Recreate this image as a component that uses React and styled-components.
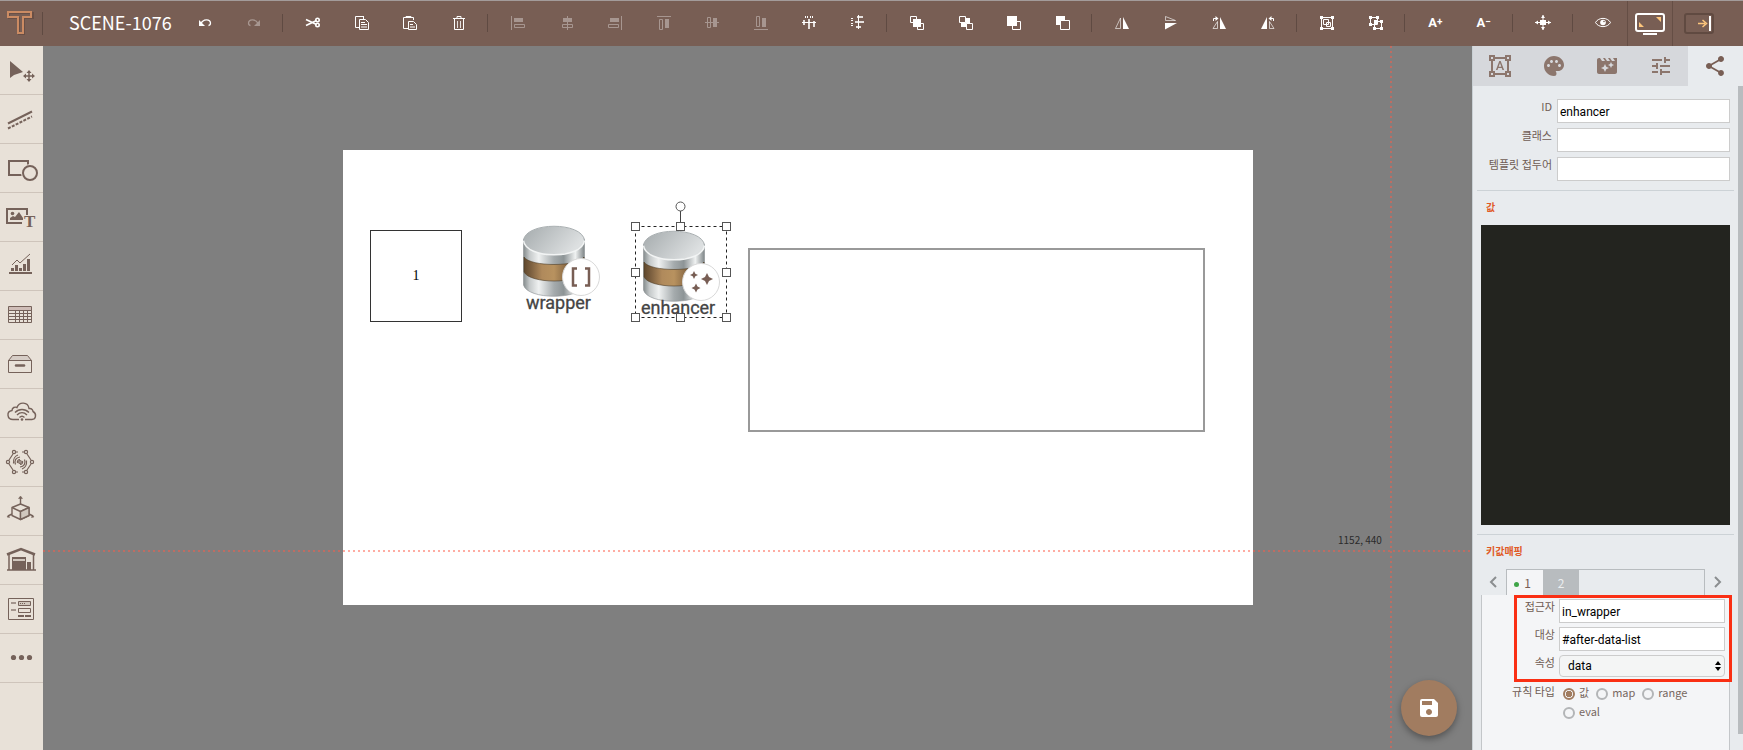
import React, { useState } from "react";
import styled, { createGlobalStyle, css } from "styled-components";
import {
  MdFormatShapes,
  MdPalette,
  MdMovieFilter,
  MdTune,
  MdShare,
  MdSave,
} from "react-icons/md";

const BROWN = "#785e54";
const TOOL = "#75625a";
const SAND = "#e8e1d8";

const GlobalStyle = createGlobalStyle`
  * {
    box-sizing: border-box;
  }
  body {
    margin: 0;
    font-family: "Noto Sans CJK KR", "Noto Sans", sans-serif;
    font-size: 11px;
    color: ${BROWN};
  }
  button {
    border: none;
    padding: 0;
    background: transparent;
    color: inherit;
    font: inherit;
    cursor: pointer;
  }
  svg {
    display: block;
  }
`;

const Page = styled.div`
  height: 100vh;
  display: flex;
  flex-direction: column;
  overflow: hidden;
`;

/* top toolbar */

const Toolbar = styled.header`
  flex: none;
  height: 46px;
  display: flex;
  align-items: stretch;
  background: ${BROWN};
  border-top: 1px solid #a39b9a;
  padding-bottom: 1px;
  color: #fff;
`;

const Logo = styled.a`
  width: 42px;
  display: flex;
  align-items: center;
  padding-left: 6px;
`;

const Divider = styled.span`
  flex: none;
  align-self: center;
  width: ${(p) => p.$width || 11}px;
  height: ${(p) => p.$height || 18}px;
  display: flex;
  &::before {
    content: "";
    width: 1px;
    margin-left: ${(p) => (p.$width ? 0 : 4)}px;
    background: #5f4a42;
  }
`;

const Title = styled.h1`
  flex: none;
  width: 138px;
  margin: 0;
  padding-left: 26px;
  font-size: 18px;
  line-height: 42px;
  font-weight: 400;
`;

const Tools = styled.div`
  flex: 1;
  display: flex;
`;

const ToolButton = styled.button`
  flex: 1;
  display: flex;
  align-items: center;
  justify-content: center;
  opacity: ${(p) => (p.disabled ? 0.35 : 1)};
`;

const FontTool = styled.span`
  display: flex;
  font: 700 13px/16px Roboto, sans-serif;
  sup {
    font-size: 10px;
    line-height: 14px;
    vertical-align: top;
  }
`;

const WideTool = styled.button`
  flex: none;
  width: ${(p) => p.$width}px;
  margin-bottom: -1px;
  padding-left: ${(p) => p.$pad}px;
  border-left: 1px solid #654e45;
  display: flex;
  align-items: center;
`;

/* left tool bar */

const Body = styled.div`
  flex: 1;
  min-height: 0;
  display: flex;
`;

const Sidebar = styled.nav`
  flex: none;
  width: 43px;
  background: ${SAND};
`;

const SideButton = styled.button`
  display: block;
  width: 100%;
  height: 49px;
  border-bottom: 1px solid #cec4bb;
  color: ${TOOL};
`;

/* scene */

const Workspace = styled.main`
  flex: 1;
  position: relative;
  overflow: hidden;
  background: #7f7f7f;
`;

const Board = styled.div`
  position: absolute;
  left: 300px;
  top: 104px;
  width: 910px;
  height: 455px;
  background: #fff;
`;

const Item = styled.div`
  position: absolute;
  left: ${(p) => p.$x}px;
  top: ${(p) => p.$y}px;
`;

const TextBox = styled(Item)`
  width: 92px;
  height: 92px;
  border: 1px solid #333;
  display: flex;
  align-items: center;
  justify-content: center;
  font: 14px "Liberation Serif", serif;
  color: #000;
`;

const DataBox = styled(Item)`
  width: 457px;
  height: 184px;
  border: 2px solid #999;
`;

const Guide = styled.div`
  position: absolute;
  ${(p) =>
    p.$vertical
      ? css`
          left: 1347px;
          top: 0;
          bottom: 0;
          width: 2px;
          background: repeating-linear-gradient(
            180deg,
            rgba(255, 90, 70, 0.5) 0 2px,
            transparent 2px 5px
          );
        `
      : css`
          left: 0;
          right: 0;
          top: 504px;
          height: 2px;
          background: repeating-linear-gradient(
            90deg,
            rgba(255, 90, 70, 0.5) 0 2px,
            transparent 2px 5px
          );
        `}
`;

const Position = styled.span`
  position: absolute;
  left: 1295px;
  top: 486px;
  font-size: 10px;
  line-height: 16px;
  color: #2b2b2b;
`;

const SaveButton = styled.button`
  position: absolute;
  right: 15px;
  bottom: 14px;
  width: 56px;
  height: 56px;
  border-radius: 50%;
  && {
    background: #a17c60;
    color: #fff;
  }
  display: flex;
  align-items: center;
  justify-content: center;
  box-shadow: 0 3px 7px rgba(0, 0, 0, 0.35);
`;

/* property panel */

const Panel = styled.aside`
  flex: none;
  width: 271px;
  display: flex;
  flex-direction: column;
  background: #e8ebee;
  border-left: 1px solid #c9d0d4;
`;

const PanelTabs = styled.div`
  flex: none;
  display: flex;
  height: 40px;
  padding-right: 1px;
`;

const PanelTab = styled.button`
  flex: 1;
  display: flex;
  align-items: center;
  justify-content: center;
  && {
    background: ${(p) => (p.$active ? "transparent" : "#d6d8dc")};
    color: ${(p) => (p.$active ? BROWN : "#8c766d")};
  }
`;

const PanelBody = styled.div`
  flex: 1;
  min-height: 0;
  display: flex;
`;

const PanelContent = styled.div`
  flex: 1;
  min-width: 0;
  display: flex;
  flex-direction: column;
  padding: 0 4px;
`;

const ScrollThumb = styled.div`
  width: 5px;
  margin-bottom: 16px;
  background: #b8bcbf;
`;

const Section = styled.section`
  padding: 0 4px;
  border-bottom: 1px solid #ccd2d6;
`;

const MappingSection = styled.section`
  flex: 1;
  display: flex;
  flex-direction: column;
  padding: 0 4px;
`;

const Fields = styled.div`
  display: grid;
  grid-template-columns: 71px 1fr;
  column-gap: 5px;
  row-gap: 5px;
  padding: 13px 0 9px;
`;

const Label = styled.label`
  text-align: right;
  line-height: 14px;
  color: #6f5c54;
`;

const TextInput = styled.input`
  width: 100%;
  height: 24px;
  border: 1px solid #ccc;
  background: #fff;
  padding: 2px 2px 0;
  font: 12px Roboto, sans-serif;
  color: #000;
  outline: none;
`;

const Heading = styled.h2`
  margin: 8px 0 10px;
  padding: 0 5px;
  font-size: 10px;
  line-height: 16px;
  font-weight: 700;
  color: #e05a26;
`;

const CodeEditor = styled.textarea`
  display: block;
  width: 100%;
  height: 300px;
  margin-bottom: 9px;
  border: none;
  resize: none;
  outline: none;
  background: #23241f;
  color: #f8f8f2;
`;

const MappingTabs = styled.div`
  display: flex;
  height: 26px;
`;

const Arrow = styled.button`
  flex: none;
  width: 25px;
  display: flex;
  align-items: center;
  justify-content: center;
`;

const TabStrip = styled.div`
  flex: 1;
  display: flex;
  border: 1px solid #b8bcbf;
  border-bottom: none;
`;

const MappingTab = styled.button`
  width: 36px;
  font-size: 12px;
  line-height: 24px;
  && {
    padding-right: ${(p) => (p.$active ? 5 : 0)}px;
    background: ${(p) => (p.$active ? "#f4f5f7" : "#b8bcbf")};
    color: ${(p) => (p.$active ? BROWN : "#eceeef")};
  }
`;

const Dot = styled.span`
  display: inline-block;
  width: 5px;
  height: 5px;
  margin-right: 5px;
  vertical-align: middle;
  border-radius: 50%;
  background: #3fa548;
`;

const MappingBody = styled.div`
  flex: 1;
  background: #f4f5f7;
  border: solid #c3c6c9;
  border-width: 0 1px;
`;

const Rules = styled.div`
  position: relative;
  display: grid;
  grid-template-columns: 73px 1fr;
  column-gap: 4px;
  row-gap: 4px;
  padding: 4px 4px 4px 0;
  &::after {
    content: "";
    position: absolute;
    inset: 0 -3px -1px 32px;
    border: 3px solid #fa2f14;
    pointer-events: none;
  }
`;

const SelectWrap = styled.div`
  position: relative;
  svg {
    position: absolute;
    right: 4px;
    top: 6px;
    pointer-events: none;
  }
`;

const Select = styled.select`
  appearance: none;
  display: block;
  width: 100%;
  height: 22px;
  border: 1px solid #ccc;
  border-radius: 4px;
  background: #f4f5f5;
  padding: 0 8px;
  font: 12px Roboto, sans-serif;
  color: #000;
  outline: none;
`;

const RuleType = styled.fieldset`
  display: grid;
  grid-template-columns: 73px 1fr;
  column-gap: 8px;
  margin: 0;
  padding: 3px 0 0;
  border: none;
`;

const Options = styled.div`
  display: flex;
  flex-wrap: wrap;
  column-gap: 7px;
`;

const Option = styled.label`
  display: flex;
  align-items: center;
  height: 19px;
  gap: 4px;
  color: #77675f;
  line-height: 16px;
  span {
    margin-top: -3px;
  }
`;

const Radio = styled.input`
  appearance: none;
  width: 12px;
  height: 12px;
  margin: 0;
  border: 2px solid #b3b5b7;
  border-radius: 50%;
  &:checked {
    border-color: #a17c60;
    background: radial-gradient(#a17c60 0 3px, transparent 3px);
  }
`;

const Glyph = ({ children }) => (
  <svg
    width="16"
    height="16"
    viewBox="0 0 16 16"
    fill="none"
    stroke="none"
    aria-hidden="true"
  >
    {children}
  </svg>
);

const undoShape = (
  <>
    <path d="M2 5v6h6z" fill="#fff" />
    <path
      d="M4 8.500C6 4 13 3.500 13.500 8c0 1.500-.5 2.300-2 2.500"
      stroke="#fff"
      strokeWidth="1.300"
    />
  </>
);

const mirror = "matrix(-1 0 0 1 16 0)";

const rotateShape = (
  <>
    <path d="M9 2v12h6z" fill="#fff" />
    <path d="M6.500 6.500v7H2z" stroke="#fff" strokeOpacity=".65" />
    <path d="M2.500 6V3.500H5" stroke="#fff" />
    <path d="M4.500 1v5l3-2.500z" fill="#fff" />
  </>
);

const icons = {
  undo: undoShape,
  redo: <g transform={mirror}>{undoShape}</g>,
  cut: (
    <g stroke="#fff" strokeWidth="1.600">
      <path d="M1 4.500l10.500 5M1 10.500l10.500-5" />
      <circle cx="12.500" cy="5" r="1.700" />
      <circle cx="12.500" cy="10" r="1.700" />
    </g>
  ),
  copy: (
    <g stroke="#fff">
      <path d="M5 12.500H1.500v-11H9" />
      <path d="M9.500 1v3M5.500 4.500h6l3 3v7h-9zM7 7.500h4M7 9.500h6M7 12h6" />
    </g>
  ),
  paste: (
    <g stroke="#fff">
      <path d="M6 13.500H1.500v-11h10V5M4 2V1.500h5V3" />
      <path d="M6.500 6.500h5l3 3v5h-8zM8 9.500h3M8 12h5" />
    </g>
  ),
  trash: (
    <g stroke="#fff">
      <path d="M2 3.500h12M6 3V1.500h4V3M3.500 4v10.500h9V4" />
      <path d="M6.500 6v7M9.500 6v7" strokeOpacity=".8" />
    </g>
  ),
  alignLeft: (
    <g fill="#fff">
      <path d="M1 1h1v14H1zM4 3h9v4H4z" />
      <path d="M4.500 9.500h10v3h-10z" fill="none" stroke="#fff" />
    </g>
  ),
  alignCenter: (
    <g fill="#fff">
      <path d="M8 1h1v14H8zM4 3h9v4H4z" />
      <path d="M3.500 9.500h10v3h-10z" fill="none" stroke="#fff" />
    </g>
  ),
  alignRight: (
    <g fill="#fff">
      <path d="M14 1h1v14h-1zM3 3h9v4H3z" />
      <path d="M1.500 9.500h10v3h-10z" fill="none" stroke="#fff" />
    </g>
  ),
  alignTop: (
    <g fill="#fff">
      <path d="M1 1h14v1H1zM9 4h4v9H9z" />
      <path d="M3.500 4.500h3v10h-3z" fill="none" stroke="#fff" />
    </g>
  ),
  alignMiddle: (
    <g fill="#fff">
      <path d="M1 7h14v1H1zM9 3h4v9H9z" />
      <path d="M3.500 2.500h3v10h-3z" fill="none" stroke="#fff" />
    </g>
  ),
  alignBottom: (
    <g fill="#fff">
      <path d="M1 14h14v1H1zM9 3h4v9H9z" />
      <path d="M3.500 1.500h3v10h-3z" fill="none" stroke="#fff" />
    </g>
  ),
  spaceX: (
    <g fill="#fff">
      <path d="M1 7h14v1H1zM4 1h1v2H4zM6 1h1v2H6zM9 1h1v2H9zM11 1h1v2h-1z" />
      <path d="M2 5h2v5H2zM7 4h2v10H7zM12 6h2v6h-2z" fillOpacity=".8" />
    </g>
  ),
  spaceY: (
    <g fill="#fff">
      <path d="M8 0h1v14H8zM1 3h2v1H1zM1 5h2v1H1zM1 8h2v1H1zM1 10h2v1H1z" />
      <path d="M7 1h6v2H7zM5 6h9v2H5zM6 11h5v2H6z" fillOpacity=".8" />
    </g>
  ),
  toFront: (
    <>
      <path d="M1.500 1.500h6v6h-6zM8.500 8.500h6v6h-6z" stroke="#fff" />
      <path d="M4 4h8v8H4z" fill="#fff" />
    </>
  ),
  toBack: (
    <>
      <path d="M3 3h9v9H3z" fill="#fff" />
      <path
        d="M1.500 1.500h6v6h-6zM8.500 8.500h6v6h-6z"
        fill={BROWN}
        stroke="#fff"
      />
    </>
  ),
  forward: (
    <>
      <path d="M6.500 6.500h8v8h-8z" stroke="#fff" />
      <path d="M1 1h10v10H1z" fill="#fff" />
    </>
  ),
  backward: (
    <>
      <path d="M1 1h9v9H1z" fill="#fff" />
      <path d="M5.500 5.500h9v9h-9z" fill={BROWN} stroke="#fff" />
    </>
  ),
  flipX: (
    <>
      <path d="M9 2v12h6z" fill="#fff" />
      <path d="M6.500 3v10.500H1.500z" stroke="#fff" strokeOpacity=".6" />
    </>
  ),
  flipY: (
    <>
      <path d="M2 8h12L2 14.500z" fill="#fff" />
      <path d="M2.500 1.500v4h10z" stroke="#fff" strokeOpacity=".6" />
    </>
  ),
  rotateCw: rotateShape,
  rotateCcw: <g transform={mirror}>{rotateShape}</g>,
  group: (
    <>
      <path
        d="M2.500 2.500h11v11h-11zM4.500 4.500h5v5h-5zM7.500 7.500h4v4h-4z"
        stroke="#fff"
      />
      <path
        d="M1 1h3v3H1zM12 1h3v3h-3zM1 12h3v3H1zM12 12h3v3h-3z"
        fill="#fff"
      />
    </>
  ),
  ungroup: (
    <>
      <path d="M2.500 2.500h7v7h-7zM6.500 6.500h7v7h-7z" stroke="#fff" />
      <path
        d="M1 1h3v3H1zM8 1h3v3H8zM1 8h3v3H1zM6 5h4v4H6zM12 5h3v3h-3zM5 12h3v3H5zM12 12h3v3h-3z"
        fill="#fff"
      />
    </>
  ),
  fit: (
    <g fill="#fff">
      <path d="M5 5h6v5H5z" />
      <path d="M0 7h16v1H0zM7.500 0h1v15h-1z" />
      <path d="M0 7.500L3 5.500v4zM16 7.500L13 5.500v4zM8 0l2 3H6zM8 15l2-3H6z" />
    </g>
  ),
  eye: (
    <>
      <path
        d="M.5 7.500C3.500 2 12.500 2 15.500 7.500 12.500 13 3.500 13 .5 7.500z"
        stroke="#fff"
      />
      <circle cx="8" cy="7.500" r="2.800" fill="#fff" />
      <circle cx="9" cy="6.500" r=".8" fill={BROWN} />
    </>
  ),
};

const toolGroups = [
  [
    ["Undo", "undo"],
    ["Redo", "redo", true],
  ],
  [
    ["Cut", "cut"],
    ["Copy", "copy"],
    ["Paste", "paste"],
    ["Delete", "trash"],
  ],
  [
    ["Align left", "alignLeft", true],
    ["Align center", "alignCenter", true],
    ["Align right", "alignRight", true],
    ["Align top", "alignTop", true],
    ["Align middle", "alignMiddle", true],
    ["Align bottom", "alignBottom", true],
    ["Distribute horizontally", "spaceX"],
    ["Distribute vertically", "spaceY"],
  ],
  [
    ["Bring to front", "toFront"],
    ["Send to back", "toBack"],
    ["Bring forward", "forward"],
    ["Send backward", "backward"],
  ],
  [
    ["Flip horizontally", "flipX"],
    ["Flip vertically", "flipY"],
    ["Rotate clockwise", "rotateCw"],
    ["Rotate counterclockwise", "rotateCcw"],
  ],
  [
    ["Group", "group"],
    ["Ungroup", "ungroup"],
  ],
  [
    ["Larger font", "+"],
    ["Smaller font", "−"],
  ],
  [["Fit scene", "fit"]],
  [["Preview", "eye"]],
];

const dots = (list, r) =>
  list.map(([x, y]) => <circle key={`${x}-${y}`} cx={x} cy={y} r={r} />);

const sideTools = [
  {
    name: "Select",
    art: (
      <>
        <path d="M10 15v17l4-3 9-3z" fill={TOOL} />
        <path d="M24 30h10M29 25v10" stroke={TOOL} strokeWidth="1.500" />
        <path
          d="M23 30l3-2.500v5zM35 30l-3-2.500v5zM29 24l2.500 3h-5zM29 36l2.500-3h-5z"
          fill={TOOL}
        />
      </>
    ),
  },
  {
    name: "Line",
    art: (
      <g stroke={TOOL} strokeWidth="2">
        <path d="M8 28.500L32 16.500" />
        <path d="M8 33.500L32 21.500" strokeDasharray="3 1.300" />
      </g>
    ),
  },
  {
    name: "Shape",
    art: (
      <g stroke={TOOL} strokeWidth="2">
        <path d="M9 17h19v14H9z" />
        <circle cx="30" cy="29" r="9" fill={SAND} stroke="none" />
        <circle cx="30" cy="29" r="7" />
      </g>
    ),
  },
  {
    name: "Text and media",
    art: (
      <>
        <path d="M27 22v-6H7v14h15" stroke={TOOL} strokeWidth="2" />
        <circle cx="12.500" cy="20.500" r="1.800" fill={TOOL} />
        <path d="M10 27v-2l3-2 2 1 4-5 4 6v2z" fill={TOOL} />
        <text
          x="24"
          y="34"
          fill={TOOL}
          fontFamily="Liberation Serif, serif"
          fontWeight="700"
          fontSize="17"
        >
          T
        </text>
      </>
    ),
  },
  {
    name: "Chart",
    art: (
      <>
        <path
          d="M9 30h23v2H9zM11 26h3v3h-3zM15 23h3v6h-3zM19 26h3v3h-3zM23 22h3v7h-3zM27 17h3v12h-3z"
          fill={TOOL}
        />
        <path d="M12 23l5-5 3 3 10-9" stroke={TOOL} />
      </>
    ),
  },
  {
    name: "Table",
    art: (
      <g stroke={TOOL}>
        <path d="M8.500 15.500h23v4h-23z" fill="#cfbdb7" />
        <path d="M8.500 19.500h23v12h-23zM8 22.500h24M8 25.500h24M8 28.500h24M15.500 20v12M19.500 20v12M23.500 20v12M27.500 20v12" />
      </g>
    ),
  },
  {
    name: "Container",
    art: (
      <g stroke={TOOL}>
        <path d="M8.500 20.500l4-5h15l4 5z" fill="#d6cdc6" />
        <path d="M8.500 20.500h23v12h-23z" />
        <path d="M16 25.500h8" strokeWidth="2.500" strokeLinecap="round" />
      </g>
    ),
  },
  {
    name: "IoT",
    art: (
      <g stroke={TOOL} strokeWidth="1.400">
        <path d="M19 30.500h-6c-6 0-7-8-1-9 0-3 3-4 5-3 2-6 11-6 12 1 3-.5 4 2 4 3 4 2 3 8-1 8h-7" />
        <path d="M15 23.500c4-4 10-4 14 0M17 26c3-3 7-3 10 0M19.500 28.500c1.500-1.500 3.500-1.500 5 0" />
        <circle cx="22" cy="30.500" r="1.300" fill={TOOL} stroke="none" />
      </g>
    ),
  },
  {
    name: "Network",
    art: (
      <g stroke={TOOL} strokeWidth="1.200">
        <path d="M16 14h2M22 14h2M16 34h2M22 34h2M13 16l-4 6M27 16l4 6M9 26l4 6M31 26l-4 6" />
        {dots([[14, 14], [26, 14], [8, 24], [32, 24], [14, 34], [26, 34]], 1.6)}
        <circle cx="20" cy="24" r="1.300" />
        <path d="M17.500 25c-.5-2 .5-3.500 2.500-3.500M15.500 26.500c-1.500-4 .5-7 4.500-7.500M13.500 25.500c-.5-4 1.500-7.500 4.500-8.500M22.500 23c.5 2-.5 3.500-2.500 3.500M24.500 21.500c1.500 4-.5 7-4.500 7.500M26.500 22.500c.5 4-1.500 7.500-4.500 8.500" />
      </g>
    ),
  },
  {
    name: "3D",
    art: (
      <g stroke={TOOL} strokeWidth="1.400" strokeLinejoin="round">
        <path d="M12 27l-4 2M29 27l4 2" />
        <path d="M20.500 17l8.500 3.500v8l-8.500 4-8.500-4v-8z" fill={SAND} />
        <path d="M12 20.500l8.500 4 8.500-4M20.500 24.500v8" />
        <path d="M20.500 10v7" />
        <path d="M20.500 24.500l8.500-4v8l-8.500 4z" fill="#d0c7be" />
        <path
          d="M18.500 11.500l2-2.500 2 2.500zM8.500 28L7 30l2.500.5zM32.500 28l1.500 2-2.500.5z"
          fill={TOOL}
          strokeWidth=".5"
        />
      </g>
    ),
  },
  {
    name: "Warehouse",
    art: (
      <>
        <path d="M7 18.500L21 13l14 5.500" stroke={TOOL} strokeWidth="2.500" />
        <path
          d="M9 18v15.500M33.500 18v15.500M7 34h29"
          stroke={TOOL}
          strokeWidth="1.500"
        />
        <path d="M12 21h14v13H12zM27 26h4v8h-4z" fill={TOOL} />
        <path d="M13 23h12v2H13z" fill="#d0c7be" />
      </>
    ),
  },
  {
    name: "Form",
    art: (
      <>
        <path d="M8.500 13.500h25v21h-25z" stroke={TOOL} />
        <path d="M11 17h5v2h-5zM11 24h5v2h-5z" fill="#a3958d" />
        <path d="M18.500 16.500h12v4h-12z" fill="#d0c7be" stroke={TOOL} />
        <path d="M20 18h1v1h-1zM22 18h1v1h-1zM24 18h1v1h-1z" fill={TOOL} />
        <path d="M18.500 23.500h12v4h-12z" stroke={TOOL} />
        <path d="M18 30h6v2h-6zM25 30h6v2h-6z" fill={TOOL} />
      </>
    ),
  },
  {
    name: "More",
    art: (
      <g fill={TOOL}>
        {dots([[13.5, 23.5], [21.5, 23.5], [29.5, 23.5]], 2.6)}
      </g>
    ),
  },
];

const DataSource = ({ label, labelX, children }) => (
  <svg width="92" height="92" viewBox="0 0 92 92" aria-label={label}>
    <defs>
      <linearGradient id="steel">
        <stop offset="0" stopColor="#858c8d" />
        <stop offset=".1" stopColor="#c5c9ca" />
        <stop offset=".25" stopColor="#eff1f1" />
        <stop offset=".5" stopColor="#a5abad" />
        <stop offset=".66" stopColor="#8d9496" />
        <stop offset=".85" stopColor="#f0f2f2" />
        <stop offset="1" stopColor="#7f8688" />
      </linearGradient>
      <linearGradient id="bronze">
        <stop offset="0" stopColor="#5f482d" />
        <stop offset=".12" stopColor="#7d6040" />
        <stop offset=".3" stopColor="#b08a5c" />
        <stop offset=".5" stopColor="#b8925f" />
        <stop offset=".7" stopColor="#8a6a45" />
        <stop offset="1" stopColor="#4e3a22" />
      </linearGradient>
      <linearGradient id="lid" x2="1" y2=".4">
        <stop offset="0" stopColor="#a5abad" />
        <stop offset="1" stopColor="#dde0e1" />
      </linearGradient>
    </defs>
    <path
      d="M7.500 14v46c4 15 57 15 61 0V14z"
      fill="url(#steel)"
      stroke="#8a9092"
      strokeOpacity=".6"
    />
    <path
      d="M8 32c6 10 54 10 60 0v15c-6 12-54 12-60 0z"
      fill="url(#bronze)"
      stroke="#4e3c25"
      strokeOpacity=".6"
    />
    <ellipse cx="38" cy="15.500" rx="30.500" ry="14" fill="url(#lid)" />
    <path
      d="M7.500 15.500c2 19 59 19 61 0"
      fill="none"
      stroke="#f2f4f4"
      strokeWidth="1.500"
    />
    <path
      d="M7.500 15.500c2-19 59-19 61 0"
      fill="none"
      stroke="#a9afb1"
      strokeWidth="1"
    />
    <circle cx="65" cy="52" r="18.500" fill="#fff" stroke="#d9d9d9" />
    {children}
    <text
      x={labelX}
      y="84"
      fill="#444"
      stroke="#444"
      strokeWidth=".3"
      fontFamily="Roboto, sans-serif"
      fontSize="18"
    >
      {label}
    </text>
  </svg>
);

const star = (x, y, r) => {
  const k = r / 3;
  return (
    <path
      d={`M${x} ${y - r}l${k} ${r - k} ${r - k} ${k} ${k - r} ${k} ${-k} ${
        r - k
      } ${-k} ${k - r} ${k - r} ${-k} ${r - k} ${-k}z`}
      fill={BROWN}
    />
  );
};

const Selection = () => (
  <svg width="102" height="122" viewBox="0 0 102 122" fill="none">
    <path
      d="M5.500 25.500h91v91h-91z"
      stroke="#222"
      strokeDasharray="3 3"
    />
    <path d="M50.500 9v12" stroke="#444" />
    <circle cx="50.500" cy="5.500" r="4.500" fill="#fff" stroke="#555" />
    <g fill="#fff" stroke="#555">
      {[
        [5, 25], [50, 25], [96, 25],
        [5, 71], [96, 71],
        [5, 116], [50, 116], [96, 116],
      ].map(([x, y]) => (
        <rect key={`${x}-${y}`} x={x - 3.5} y={y - 3.5} width="8" height="8" />
      ))}
    </g>
  </svg>
);

const Chevron = ({ d }) => (
  <svg width="10" height="14" viewBox="0 0 10 14" fill="none">
    <path d={d} stroke="#8b8e90" strokeWidth="2" />
  </svg>
);

const panelTabs = [
  ["Shape", MdFormatShapes],
  ["Style", MdPalette],
  ["Effects", MdMovieFilter],
  ["Properties", MdTune],
  ["Data", MdShare],
];

const ruleTypes = [
  ["value", "값"],
  ["map", "map"],
  ["range", "range"],
  ["eval", "eval"],
];

const TopBar = () => (
  <Toolbar>
    <Logo href="#" aria-label="Home">
      <svg width="28" height="26" viewBox="0 0 28 26" fill="none">
        <path
          d="M3 3h24v5h-9v16h-5V8H3z"
          stroke="#4f3a32"
          strokeOpacity=".4"
          strokeWidth="2"
        />
        <path d="M2 2h23v5h-8v16h-5V7H2z" stroke="#cb8b63" strokeWidth="2" />
      </svg>
    </Logo>
    <Divider $width={1} $height={23} />
    <Title>SCENE-1076</Title>
    <Tools>
      {toolGroups.map((group, i) => (
        <React.Fragment key={i}>
          {i > 0 && <Divider />}
          {group.map(([name, icon, disabled]) => (
            <ToolButton key={name} aria-label={name} disabled={disabled}>
              {icons[icon] ? (
                <Glyph>{icons[icon]}</Glyph>
              ) : (
                <FontTool>
                  A<sup>{icon}</sup>
                </FontTool>
              )}
            </ToolButton>
          ))}
        </React.Fragment>
      ))}
    </Tools>
    <WideTool $width={45} $pad={7} aria-label="Full screen">
      <svg width="30" height="22" viewBox="0 0 30 22" fill="none">
        <rect
          x="1"
          y="1"
          width="28"
          height="17"
          rx="2"
          stroke="#fff"
          strokeWidth="2"
        />
        <path d="M8 20h14v2H8z" fill="#fff" />
        <path d="M4 9v5h5zM21 4h5v5z" fill="#fdc67c" />
      </svg>
    </WideTool>
    <WideTool $width={71} $pad={11} aria-label="Hide panel">
      <svg width="30" height="22" viewBox="0 0 30 22" fill="none">
        <rect
          x="1"
          y="1"
          width="28"
          height="19"
          rx="2"
          stroke="#604a41"
          strokeWidth="2"
        />
        <path d="M25 3h2v15h-2z" fill="#fff" />
        <path
          d="M14 10.500h7M18.500 7l4 3.500-4 3.500"
          stroke="#fdc67c"
          strokeWidth="1.500"
        />
      </svg>
    </WideTool>
  </Toolbar>
);

const Scene = () => (
  <Workspace>
    <Board>
      <TextBox $x={27} $y={80}>
        1
      </TextBox>
      <Item $x={173} $y={75}>
        <DataSource label="wrapper" labelX="10">
          <path
            d="M61 43.500h-4v17h4M69 43.500h4v17h-4"
            fill="none"
            stroke={BROWN}
            strokeWidth="2.500"
          />
        </DataSource>
      </Item>
      <Item $x={293} $y={80}>
        <DataSource label="enhancer" labelX="5">
          {star(71, 49, 6)}
          {star(58, 45, 4)}
          {star(60, 58, 4.5)}
        </DataSource>
      </Item>
      <DataBox $x={405} $y={98} />
      <Item $x={287} $y={51}>
        <Selection />
      </Item>
    </Board>
    <Guide />
    <Guide $vertical />
    <Position>1152, 440</Position>
    <SaveButton aria-label="Save">
      <MdSave size={24} />
    </SaveButton>
  </Workspace>
);

const PropertyPanel = () => {
  const [ruleType, setRuleType] = useState("value");

  return (
    <Panel>
      <PanelTabs>
        {panelTabs.map(([name, Icon]) => (
          <PanelTab key={name} aria-label={name} $active={name === "Data"}>
            <Icon size={24} />
          </PanelTab>
        ))}
      </PanelTabs>
      <PanelBody>
        <PanelContent>
          <Section>
            <Fields>
              <Label htmlFor="item-id">ID</Label>
              <TextInput id="item-id" defaultValue="enhancer" />
              <Label htmlFor="item-class">클래스</Label>
              <TextInput id="item-class" />
              <Label htmlFor="item-prefix">템플릿 접두어</Label>
              <TextInput id="item-prefix" />
            </Fields>
          </Section>
          <Section>
            <Heading id="value-heading">값</Heading>
            <CodeEditor aria-labelledby="value-heading" />
          </Section>
          <MappingSection>
            <Heading>키값매핑</Heading>
            <MappingTabs>
              <Arrow aria-label="Previous">
                <Chevron d="M7 2L2 7l5 5" />
              </Arrow>
              <TabStrip>
                <MappingTab $active>
                  <Dot />1
                </MappingTab>
                <MappingTab>2</MappingTab>
              </TabStrip>
              <Arrow aria-label="Next">
                <Chevron d="M2 2l5 5-5 5" />
              </Arrow>
            </MappingTabs>
            <MappingBody>
              <Rules>
                <Label htmlFor="accessor">접근자</Label>
                <TextInput id="accessor" defaultValue="in_wrapper" />
                <Label htmlFor="target">대상</Label>
                <TextInput id="target" defaultValue="#after-data-list" />
                <Label htmlFor="property">속성</Label>
                <SelectWrap>
                  <Select id="property" defaultValue="data">
                    <option value="data">data</option>
                  </Select>
                  <svg width="6" height="10" viewBox="0 0 6 10">
                    <path d="M3 0l3 4H0zM3 10l3-4H0z" fill="#000" />
                  </svg>
                </SelectWrap>
              </Rules>
              <RuleType aria-labelledby="rule-type">
                <Label as="span" id="rule-type">
                  규칙 타입
                </Label>
                <Options>
                  {ruleTypes.map(([value, text]) => (
                    <Option key={value}>
                      <Radio
                        type="radio"
                        name="rule-type"
                        checked={ruleType === value}
                        onChange={() => setRuleType(value)}
                      />
                      <span>{text}</span>
                    </Option>
                  ))}
                </Options>
              </RuleType>
            </MappingBody>
          </MappingSection>
        </PanelContent>
        <ScrollThumb />
      </PanelBody>
    </Panel>
  );
};

const App = () => (
  <Page>
    <GlobalStyle />
    <TopBar />
    <Body>
      <Sidebar>
        {sideTools.map(({ name, art }) => (
          <SideButton key={name} aria-label={name}>
            <svg width="43" height="48" viewBox="0 0 43 48" fill="none">
              {art}
            </svg>
          </SideButton>
        ))}
      </Sidebar>
      <Scene />
      <PropertyPanel />
    </Body>
  </Page>
);

export default App;
